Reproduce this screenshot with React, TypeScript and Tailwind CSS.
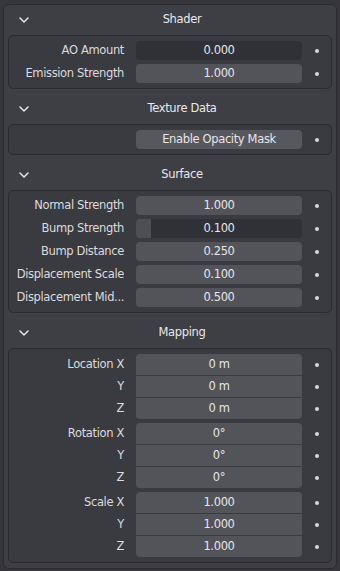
import React from "react";

type Row = {
  label: string;
  value: string;
  kind?: "field" | "slider";
  fill?: number;
};

const FONT = { fontFamily: '"DejaVu Sans", sans-serif', letterSpacing: "-0.35px" };

function Chevron() {
  return (
    <svg width="10" height="6" viewBox="0 0 10 6" className="block">
      <path d="M1 1 L5 5 L9 1" fill="none" stroke="#e6e6e6" strokeWidth="1.5" strokeLinecap="round" strokeLinejoin="round" />
    </svg>
  );
}

function Dot() {
  return (
    <div className="flex-1 flex items-center justify-center">
      <div className="w-[4px] h-[4px] rounded-full bg-[#d8d8d8]" />
    </div>
  );
}

function Header({ title }: { title: string }) {
  return (
    <div className="h-[30px] flex items-center">
      <div className="w-[26px] flex justify-center pl-[6px]">
        <Chevron />
      </div>
      <div className="flex-1 text-center text-[11.5px] text-[#e8e8e8] pr-[2px]">{title}</div>
    </div>
  );
}

function Field({ row, rounded, h }: { row: Row; rounded: string; h: string }) {
  if (row.kind === "slider") {
    const f = row.fill ?? 0;
    return (
      <div className={`relative w-[166px] ${h} ${rounded} bg-[#303037] overflow-hidden flex items-center justify-center`}>
        {f > 0 && (
          <div className="absolute left-0 top-0 bottom-0 bg-[#4e4e55]" style={{ width: `${f * 100}%` }} />
        )}
        <span className="relative text-[11.5px] text-[#e6e6e6]">{row.value}</span>
      </div>
    );
  }
  return (
    <div className={`w-[166px] ${h} ${rounded} bg-[#53535a] flex items-center justify-center`}>
      <span className="text-[11.5px] text-[#e6e6e6]">{row.value}</span>
    </div>
  );
}

function RowLine({ row, rounded = "rounded-[4px]", h = "h-[19px]" }: { row: Row; rounded?: string; h?: string }) {
  return (
    <div className="flex items-center">
      <div className="w-[115px] text-right text-[11.5px] text-[#dcdcdc] whitespace-nowrap">{row.label}</div>
      <div className="w-[12px]" />
      <Field row={row} rounded={rounded} h={h} />
      <Dot />
    </div>
  );
}

function Box({ children, py = "py-[5px]", gap = "gap-[4px]", last = false }: { children: React.ReactNode; py?: string; gap?: string; last?: boolean }) {
  return (
    <div className={`border border-[#2a2a30] rounded-[5px] bg-[#3a3a41] ${py} flex flex-col ${gap} ${last ? "" : "mb-[5px]"}`}>
      {children}
    </div>
  );
}

function Group({ rows }: { rows: Row[] }) {
  return (
    <div className="flex flex-col gap-[1px]">
      {rows.map((r, i) => {
        const rounded =
          i === 0 ? "rounded-t-[4px]" : i === rows.length - 1 ? "rounded-b-[4px]" : "";
        return <RowLine key={i} row={r} rounded={rounded} h="h-[21px]" />;
      })}
    </div>
  );
}

export default function App() {
  return (
    <div className="w-[340px] h-[571px] bg-[#36363c] pt-[4px] px-[3px]" style={FONT}>
      <div className="border border-[#2a2a2f] rounded-[6px] bg-[#3e3e45] px-[4px] pb-[5px]">
        <Header title="Shader" />
        <Box>
          <RowLine row={{ label: "AO Amount", value: "0.000", kind: "slider", fill: 0 }} />
          <RowLine row={{ label: "Emission Strength", value: "1.000" }} />
        </Box>
        <Header title="Texture Data" />
        <Box>
          <div className="flex items-center">
            <div className="w-[127px]" />
            <div className="w-[166px] h-[19px] rounded-[4px] bg-[#57575e] flex items-center justify-center">
              <span className="text-[11.5px] text-[#e6e6e6]">Enable Opacity Mask</span>
            </div>
            <Dot />
          </div>
        </Box>
        <Header title="Surface" />
        <Box>
          <RowLine row={{ label: "Normal Strength", value: "1.000" }} />
          <RowLine row={{ label: "Bump Strength", value: "0.100", kind: "slider", fill: 0.09 }} />
          <RowLine row={{ label: "Bump Distance", value: "0.250" }} />
          <RowLine row={{ label: "Displacement Scale", value: "0.100" }} />
          <RowLine row={{ label: "Displacement Mid...", value: "0.500" }} />
        </Box>
        <Header title="Mapping" />
        <Box py="pt-[5px] pb-[5px]" last>
          <Group
            rows={[
              { label: "Location X", value: "0 m" },
              { label: "Y", value: "0 m" },
              { label: "Z", value: "0 m" },
            ]}
          />
          <Group
            rows={[
              { label: "Rotation X", value: "0°" },
              { label: "Y", value: "0°" },
              { label: "Z", value: "0°" },
            ]}
          />
          <Group
            rows={[
              { label: "Scale X", value: "1.000" },
              { label: "Y", value: "1.000" },
              { label: "Z", value: "1.000" },
            ]}
          />
        </Box>
      </div>
    </div>
  );
}
